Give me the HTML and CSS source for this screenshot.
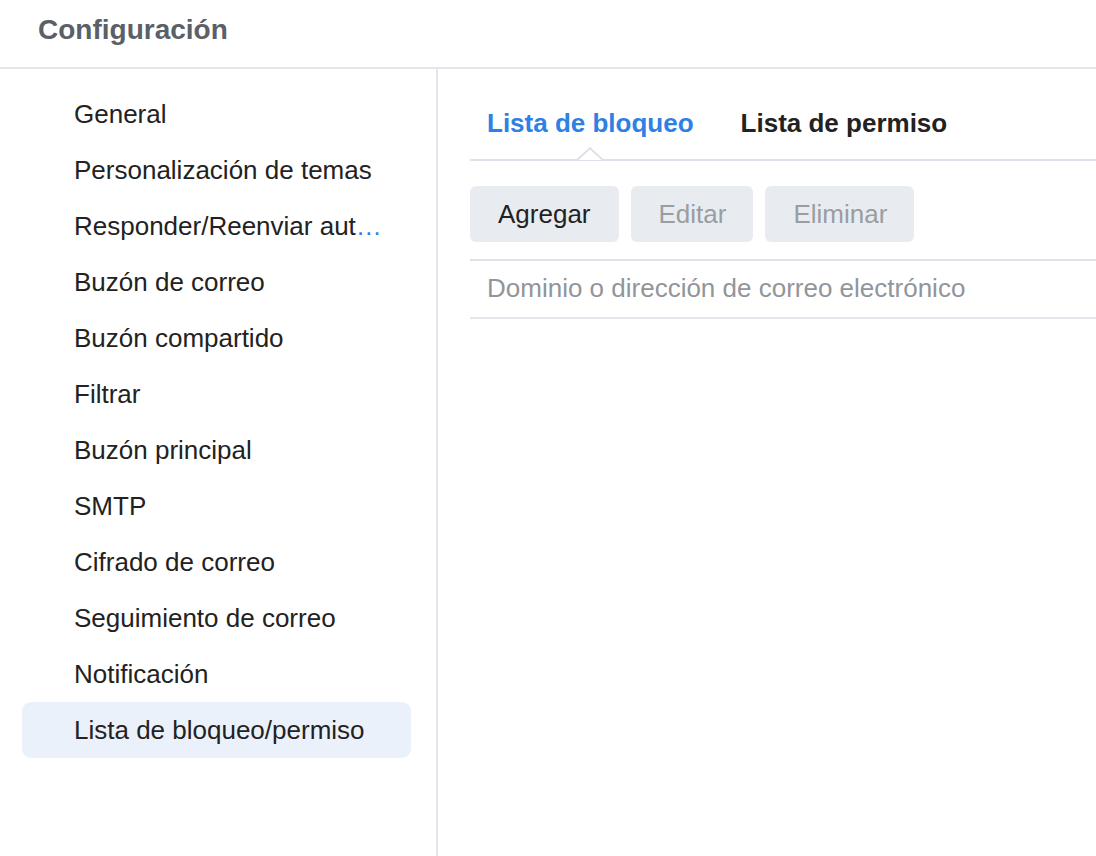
FILE: index.html
```html
<!DOCTYPE html>
<html lang="es">
<head>
<meta charset="utf-8">
<title>Configuración</title>
<link rel="stylesheet" href="styles.css">
</head>
<body>
<div class="app">
  <header class="header"><h1 class="title">Configuración</h1></header>
  <div class="main">
    <nav class="sidebar">
      <ul class="menu">
        <li class="menu-item">General</li>
        <li class="menu-item">Personalización de temas</li>
        <li class="menu-item">Responder/Reenviar aut<span class="ellipsis">…</span></li>
        <li class="menu-item">Buzón de correo</li>
        <li class="menu-item">Buzón compartido</li>
        <li class="menu-item">Filtrar</li>
        <li class="menu-item">Buzón principal</li>
        <li class="menu-item">SMTP</li>
        <li class="menu-item">Cifrado de correo</li>
        <li class="menu-item">Seguimiento de correo</li>
        <li class="menu-item">Notificación</li>
        <li class="menu-item active">Lista de bloqueo/permiso</li>
      </ul>
    </nav>
    <section class="content">
      <div class="tabs">
        <div class="tab active">Lista de bloqueo
          <svg class="caret" width="26" height="14" viewBox="0 0 26 14"><path d="M0 13 L13 1.2 L26 13" fill="#fff" stroke="#dde2ea" stroke-width="2"/></svg>
        </div>
        <div class="tab">Lista de permiso</div>
      </div>
      <div class="toolbar">
        <button class="btn">Agregar</button>
        <button class="btn disabled">Editar</button>
        <button class="btn disabled">Eliminar</button>
      </div>
      <div class="table">
        <div class="table-head">Dominio o dirección de correo electrónico</div>
      </div>
    </section>
  </div>
</div>
</body>
</html>
```
FILE: styles.css
```css
* { box-sizing: border-box; }
html, body { margin: 0; padding: 0; background: #fff; }
body { font-family: "Liberation Sans", Arial, Helvetica, sans-serif; color: #222; }
.app { width: 1096px; height: 856px; display: flex; flex-direction: column; overflow: hidden; }
.header { height: 69px; border-bottom: 2px solid #e3e6ec; padding-left: 38px; display: flex; align-items: center; flex-shrink: 0; }
.title { margin: 0; font-size: 28px; font-weight: bold; color: #5a6068; line-height: 1; padding-bottom: 8px; }
.main { flex: 1; display: flex; }
.sidebar { width: 438px; border-right: 2px solid #e3e6ee; padding: 17px 25px 0 22px; flex-shrink: 0; }
.menu { list-style: none; margin: 0; padding: 0; }
.menu-item { height: 56px; line-height: 56px; padding-left: 52px; font-size: 26px; color: #222; border-radius: 9px; white-space: nowrap; overflow: hidden; }
.menu-item.active { background: #ebf1fb; }
.ellipsis { color: #2f80e4; }
.content { flex: 1; padding: 21px 0 0 32px; }
.tabs { display: flex; gap: 13px; border-bottom: 2px solid #dde2ea; height: 71px; }
.tab { position: relative; padding: 0 17px; line-height: 66px; font-size: 26px; font-weight: bold; color: #222; white-space: nowrap; }
.tab.active { color: #2f80e4; }
.caret { position: absolute; left: 50%; margin-left: -13px; bottom: -2px; display: block; }
.toolbar { display: flex; gap: 12px; margin-top: 25px; }
.btn { height: 56px; padding: 0 28px; border: none; border-radius: 6px; background: #e8ecf0; font-family: inherit; font-size: 26px; color: #222; }
.btn.disabled { color: #9a9da1; padding: 0 27px 0 28px; }
.table { margin-top: 17px; border-top: 2px solid #dde2ea; }
.table-head { height: 58px; line-height: 55px; padding-left: 17px; border-bottom: 2px solid #e3e7ed; font-size: 26px; color: #929599; white-space: nowrap; }
```
